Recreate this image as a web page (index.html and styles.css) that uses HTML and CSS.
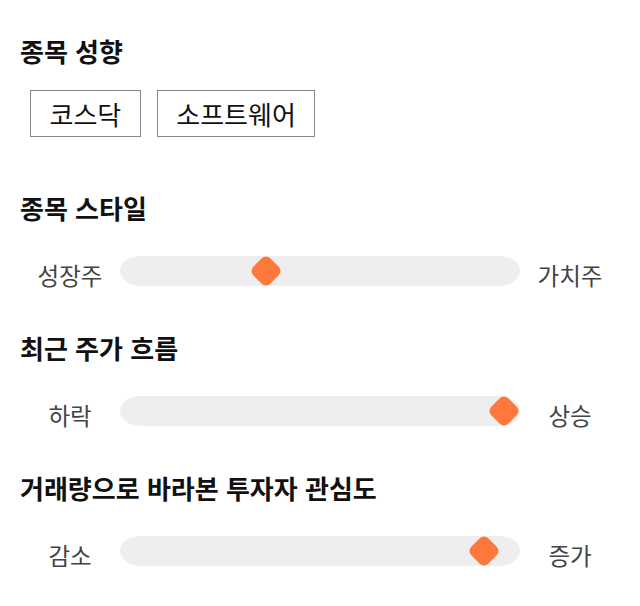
FILE: index.html
```html
<!DOCTYPE html>
<html lang="ko">
<head>
    <meta charset="UTF-8">
    <meta name="viewport" content="width=device-width, initial-scale=1.0">
    <title>종목 분석</title>
    <link rel="stylesheet" href="styles.css">
</head>
<body>
    <div class="stock-panel">
        <div class="section section-tags">
            <h2>종목 성향</h2>
            <div class="tag-list">
                <span class="tag">코스닥</span>
                <span class="tag">소프트웨어</span>
            </div>
        </div>

        <div class="section">
            <h2>종목 스타일</h2>
            <div class="slider-row">
                <span class="slider-label">성장주</span>
                <div class="slider-track">
                    <span class="slider-thumb" style="left: 36.5%"></span>
                </div>
                <span class="slider-label">가치주</span>
            </div>
        </div>

        <div class="section">
            <h2>최근 주가 흐름</h2>
            <div class="slider-row">
                <span class="slider-label">하락</span>
                <div class="slider-track">
                    <span class="slider-thumb" style="left: 96%"></span>
                </div>
                <span class="slider-label">상승</span>
            </div>
        </div>

        <div class="section">
            <h2>거래량으로 바라본 투자자 관심도</h2>
            <div class="slider-row">
                <span class="slider-label">감소</span>
                <div class="slider-track">
                    <span class="slider-thumb" style="left: 91%"></span>
                </div>
                <span class="slider-label">증가</span>
            </div>
        </div>
    </div>
</body>
</html>
```

FILE: styles.css
```css
body {
    font-family: "Noto Sans CJK KR", "Noto Sans", sans-serif;
    margin: 0;
    background-color: white;
    color: #111;
}

.stock-panel {
    padding: 36px 20px 0;
}

h2 {
    font-size: 26px;
    font-weight: bold;
    line-height: 30px;
    margin: 0;
}

.section {
    margin-bottom: 47px;
}

.section-tags {
    margin-bottom: 56px;
}

.tag-list {
    display: flex;
    gap: 16px;
    margin: 24px 0 0 10px;
}

.tag {
    font-size: 26px;
    line-height: 35px;
    padding: 5px 18.5px;
    border: 1px solid #888;
    color: #111;
}

.slider-row {
    display: grid;
    grid-template-columns: 100px 1fr 100px;
    align-items: center;
    margin-top: 33px;
}

.slider-label {
    font-size: 23.5px;
    height: 30px;
    line-height: 38px;
    color: #444;
    text-align: center;
}

.slider-track {
    position: relative;
    height: 30px;
    background-color: #eeeeee;
    border-radius: 20px / 15px;
}

.slider-thumb {
    position: absolute;
    top: 50%;
    width: 24px;
    height: 24px;
    margin: -12px 0 0 -12px;
    background-color: #fe783c;
    border-radius: 6px;
    transform: rotate(45deg);
}
```
